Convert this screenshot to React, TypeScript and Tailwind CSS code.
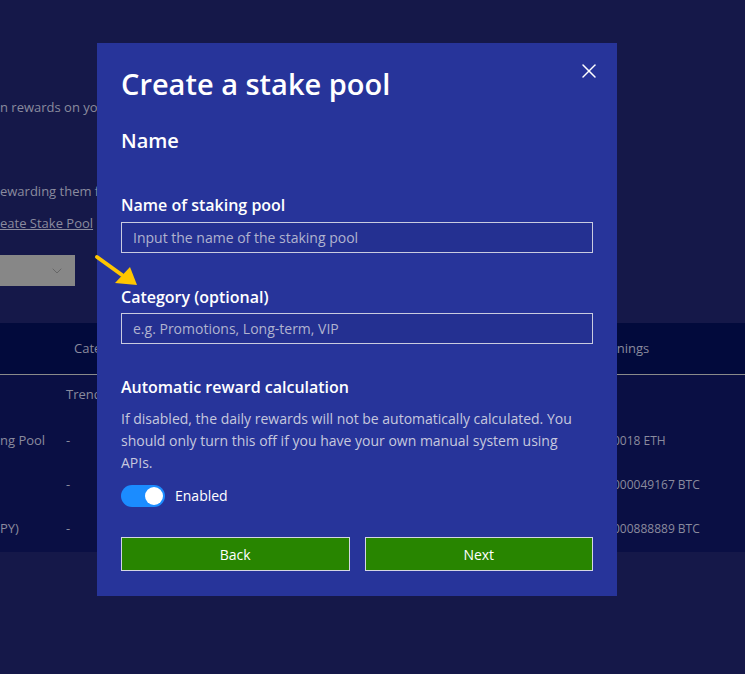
import React, { useState } from 'react';
import { X, ChevronDown } from 'lucide-react';

const rows = [
  { name: '', cat: 'Trend', earn: '' },
  { name: 'ng Pool', cat: '-', earn: '0018 ETH' },
  { name: '', cat: '-', earn: '000049167 BTC' },
  { name: 'PY)', cat: '-', earn: '000888889 BTC' },
];

const Toggle = ({ on, onChange }: { on: boolean; onChange: () => void }) => (
  <button
    onClick={onChange}
    className={`relative w-[44px] h-[22px] rounded-full transition-colors ${on ? 'bg-[#1b8cff]' : 'bg-[#8a8fb8]'}`}
  >
    <span
      className={`absolute top-[2px] w-[18px] h-[18px] rounded-full bg-white transition-all ${on ? 'left-[24px]' : 'left-[2px]'}`}
    />
  </button>
);

export default function App() {
  const [auto, setAuto] = useState(true);
  const [name, setName] = useState('');
  const [category, setCategory] = useState('');

  return (
    <div className="relative w-[745px] h-[674px] overflow-hidden bg-[#151849] font-['Open_Sans',sans-serif] text-[13px] text-[#8a8b9e]">
      {/* page behind the dialog */}
      <div className="pt-[96px]">
        <p className="leading-[22px] whitespace-nowrap">n rewards on your crypto holdings</p>
        <p className="mt-[62px] leading-[22px] whitespace-nowrap">ewarding them for holding</p>
        <p className="mt-[10px] leading-[22px] underline whitespace-nowrap">eate Stake Pool</p>
        <div className="mt-[21px] w-[75px] h-[31px] bg-[#878787] flex items-center justify-end pr-[10px]">
          <ChevronDown size={16} strokeWidth={1.5} className="text-[#666]" />
        </div>

        <div className="mt-[37px] bg-[#0a0f44]">
          <div className="h-[52px] bg-[#020a3c] border-b border-[#8a8a8a] flex items-center">
            <span className="ml-[74px]">Category</span>
            <span className="ml-auto w-[148px]">Earnings</span>
          </div>
          <div className="pt-[9px] pb-[12px]">
            {rows.map((r, i) => (
              <div
                key={i}
                className={`flex items-center h-[22px] ${i === 1 ? 'mt-[24px]' : i > 1 ? 'mt-[22px]' : ''}`}
              >
                <span className="w-[66px] whitespace-nowrap">{r.name}</span>
                <span>{r.cat}</span>
                <span className="ml-auto w-[132px] text-[12px] whitespace-nowrap">{r.earn}</span>
              </div>
            ))}
          </div>
        </div>
      </div>

      {/* dialog */}
      <div className="absolute left-[97px] top-[43px] w-[520px] bg-[#27349a] px-[24px] pt-[20px] pb-[25px] text-white">
        <button className="absolute right-[16px] top-[16px] text-white">
          <X size={24} strokeWidth={1.5} />
        </button>
        <h1 className="text-[29px] leading-[42px] font-semibold">Create a stake pool</h1>
        <h2 className="mt-[21px] text-[20px] leading-[30px] font-semibold">Name</h2>

        <label className="block mt-[37px] text-[16px] leading-[24px] font-semibold">Name of staking pool</label>
        <input
          value={name}
          onChange={(e) => setName(e.target.value)}
          placeholder="Input the name of the staking pool"
          className="mt-[5px] w-full h-[31px] px-[11px] bg-[#243091] border border-[#c9cbe0] text-[14px] text-white placeholder:text-[#b0b3cf] outline-none"
        />

        <label className="block mt-[32px] text-[16px] leading-[24px] font-semibold">Category (optional)</label>
        <input
          value={category}
          onChange={(e) => setCategory(e.target.value)}
          placeholder="e.g. Promotions, Long-term, VIP"
          className="mt-[4px] w-full h-[31px] px-[11px] bg-[#243091] border border-[#c9cbe0] text-[14px] text-white placeholder:text-[#b0b3cf] outline-none"
        />

        <h3 className="mt-[31px] text-[16px] leading-[24px] font-semibold">Automatic reward calculation</h3>
        <p className="mt-[9px] pr-[16px] text-[14px] leading-[22px] text-[#c6c8de]">
          If disabled, the daily rewards will not be automatically calculated. You should only turn this off if you have your own manual system using APIs.
        </p>
        <div className="mt-[11px] flex items-center gap-[10px]">
          <Toggle on={auto} onChange={() => setAuto(!auto)} />
          <span className="text-[14px] leading-[22px]">{auto ? 'Enabled' : 'Disabled'}</span>
        </div>

        <div className="mt-[30px] grid grid-cols-2 gap-[15px]">
          <button className="h-[34px] bg-[#288500] border border-[#d4d6e4] text-[14px]">Back</button>
          <button className="h-[34px] bg-[#288500] border border-[#d4d6e4] text-[14px]">Next</button>
        </div>
      </div>

      {/* annotation arrow */}
      <svg className="absolute left-[94px] top-[254px]" width="46" height="34" viewBox="0 0 46 34">
        <line x1="3" y1="3" x2="28" y2="21" stroke="#ffc600" strokeWidth="4" strokeLinecap="round" />
        <polygon points="43,31 21,29 36,13" fill="#ffc600" />
      </svg>
    </div>
  );
}
